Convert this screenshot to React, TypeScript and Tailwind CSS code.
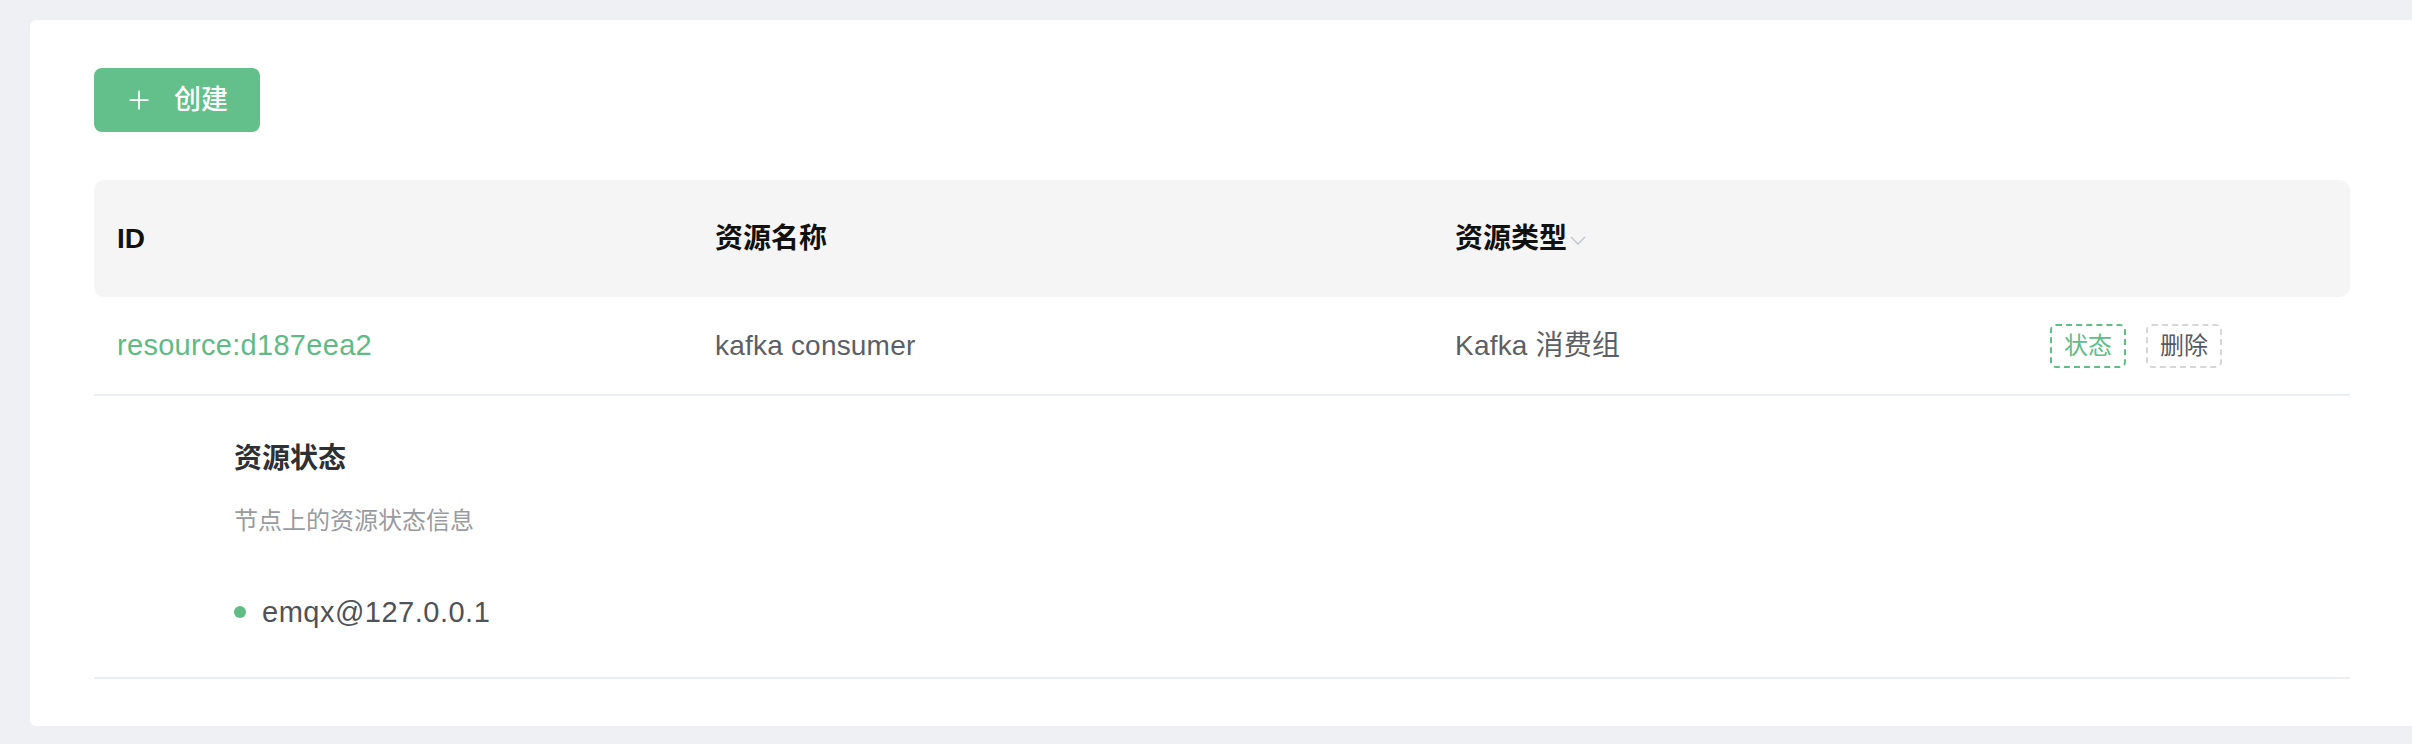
import { Plus } from "lucide-react";

const font = { fontFamily: '"Liberation Sans", "Noto Sans CJK SC", sans-serif' };

/** Thin chevron next to the sortable column title. */
function Chevron() {
  return (
    <svg width="16" height="9" viewBox="0 0 16 9" className="ml-[3px] mt-[4px]">
      <path d="M1 1l7 7 7-7" fill="none" stroke="#c0c4cc" strokeWidth="1.3" />
    </svg>
  );
}

function ActionButton({ label, tone }: { label: string; tone: "green" | "gray" }) {
  const cls =
    tone === "green"
      ? "border-[#5fbd85] text-[#5fbd85]"
      : "border-[#d6d6d6] text-[#555a60]";
  return (
    <button
      className={`flex h-[44px] w-[76px] items-center justify-center rounded-[6px] border-2 border-dashed bg-white text-[24px] ${cls}`}
    >
      {label}
    </button>
  );
}

export default function App() {
  return (
    <div className="min-h-[744px] bg-[#eff0f4] pl-[30px] pt-[20px] pb-[18px]" style={font}>
      <div className="h-[706px] rounded-l-[6px] bg-white pl-[64px] pr-[62px] pt-[48px]">
        <button className="flex h-[64px] w-[166px] items-center justify-center gap-[20px] rounded-[8px] bg-[#63c08b] pr-[2px] text-white">
          <Plus size={30} strokeWidth={1.4} />
          <span className="text-[27px] font-medium">创建</span>
        </button>

        <div className="mt-[48px]">
          {/* header */}
          <div className="grid h-[117px] grid-cols-[598px_740px_595px_1fr] items-center rounded-[10px] bg-[#f5f5f6] text-[28px] font-bold text-[#111]">
            <div className="pl-[23px]">ID</div>
            <div className="pl-[23px]">资源名称</div>
            <div className="flex items-center pl-[23px]">
              资源类型
              <Chevron />
            </div>
            <div />
          </div>

          {/* row */}
          <div className="grid h-[99px] grid-cols-[598px_740px_595px_1fr] items-center border-b-2 border-[#ebeef3] text-[28px] tracking-[0.2px] text-[#5c5f66]">
            <div className="pl-[23px] text-[29px] tracking-[0.3px] text-[#5fbb85]">resource:d187eea2</div>
            <div className="pl-[23px]">kafka consumer</div>
            <div className="pl-[23px]">Kafka 消费组</div>
            <div className="flex items-center gap-[20px] pl-[23px] tracking-normal">
              <ActionButton label="状态" tone="green" />
              <ActionButton label="删除" tone="gray" />
            </div>
          </div>

          {/* expanded detail */}
          <div className="border-b-2 border-[#ebeef3] pl-[140px] pt-[43px] pb-[45px]">
            <div className="text-[28px] font-bold leading-[40px] text-[#2f3033]">资源状态</div>
            <div className="mt-[25px] text-[24px] leading-[34px] text-[#999ba0]">节点上的资源状态信息</div>
            <div className="mt-[54px] flex items-center gap-[16px] leading-[40px]">
              <span className="h-[12px] w-[12px] rounded-full bg-[#5fbd85]" />
              <span className="text-[29px] tracking-[0.5px] text-[#4f5257]">emqx@127.0.0.1</span>
            </div>
          </div>
        </div>
      </div>
    </div>
  );
}
